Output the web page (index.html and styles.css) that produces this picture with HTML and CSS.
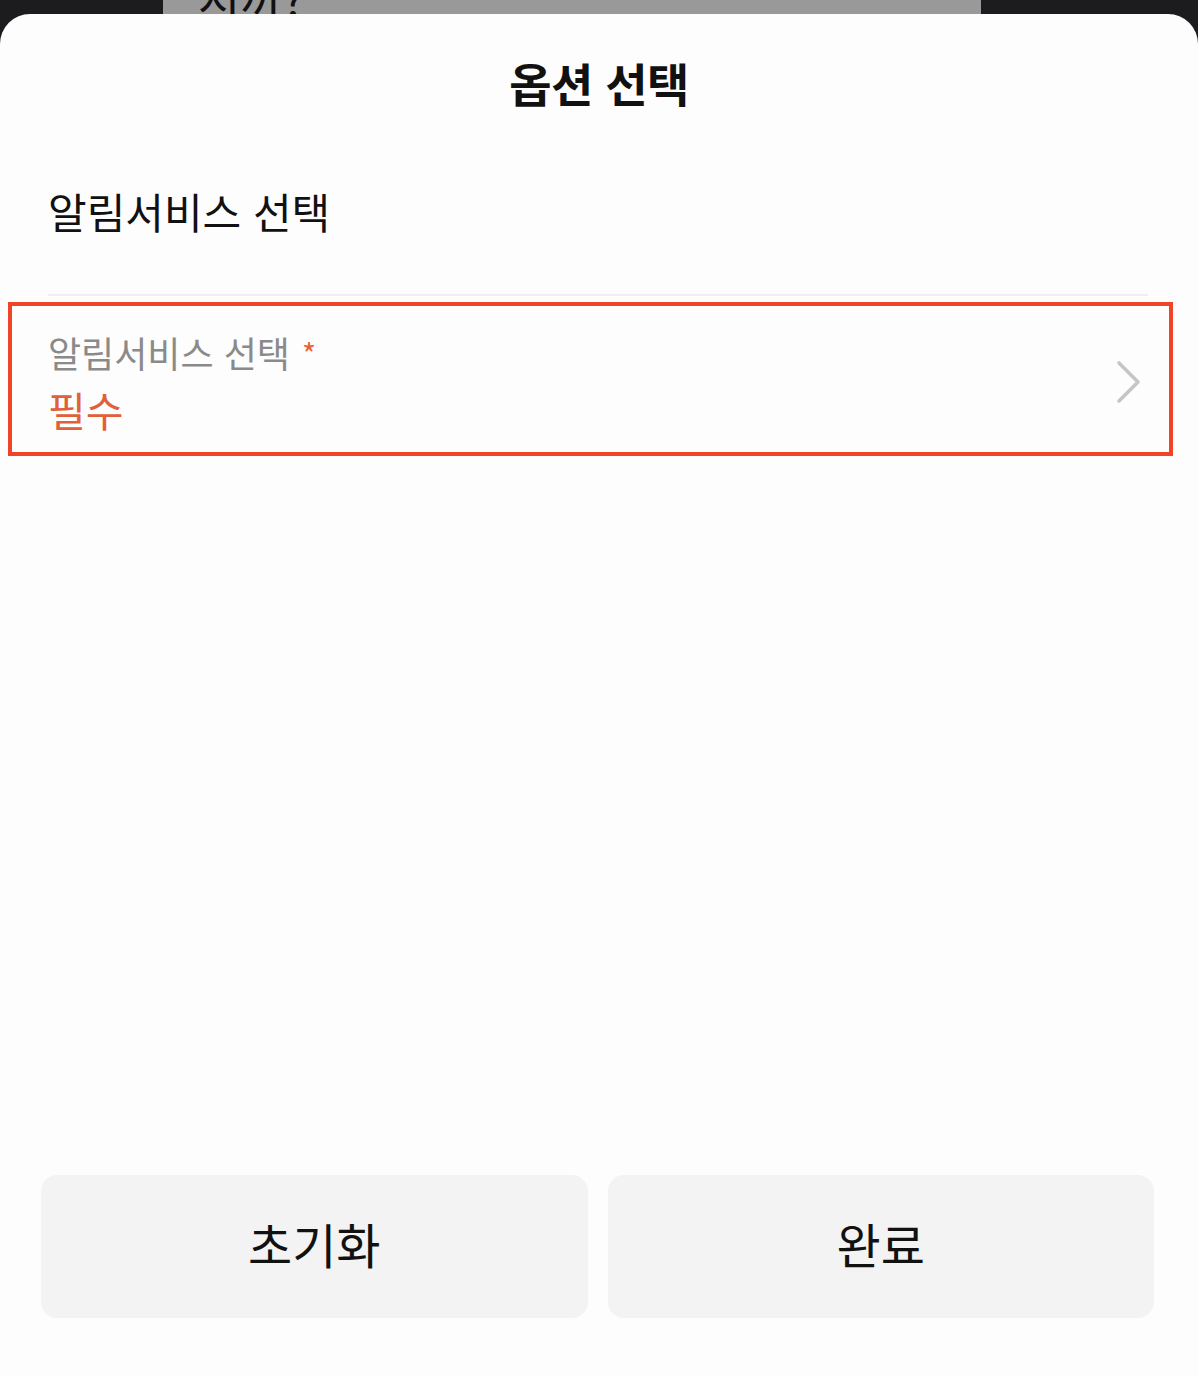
FILE: index.html
```html
<!DOCTYPE html>
<html lang="ko">
<head>
    <meta charset="UTF-8">
    <meta name="viewport" content="width=device-width, initial-scale=1.0">
    <title>옵션 선택</title>
    <link rel="stylesheet" href="styles.css">
</head>
<body>

<div class="backdrop">
    <div class="backdrop-card"><span>시까?</span></div>
</div>

<div class="sheet">
    <h2 class="sheet-title">옵션 선택</h2>

    <div class="section">
        <h3 class="section-title">알림서비스 선택</h3>
    </div>

    <div class="option-row">
        <div class="option-text">
            <div class="option-label">알림서비스 선택 <span class="required-mark">*</span></div>
            <div class="option-value">필수</div>
        </div>
        <svg class="chevron" width="28" height="44" viewBox="0 0 28 44">
            <path d="M5 3 L24 22 L5 41" fill="none" stroke="#c6c6c6" stroke-width="3.6" stroke-linecap="round" stroke-linejoin="round"/>
        </svg>
    </div>

    <div class="footer">
        <button class="footer-btn">초기화</button>
        <button class="footer-btn">완료</button>
    </div>
</div>

</body>
</html>
```

FILE: styles.css
```css
body {
    margin: 0;
    height: 1376px;
    overflow: hidden;
    background: #1c1c1e;
    font-family: "Noto Sans CJK KR", "Noto Sans", sans-serif;
    color: #111;
}
.backdrop {
    height: 14px;
    overflow: hidden;
    padding-left: 163px;
}
.backdrop-card {
    width: 818px;
    height: 14px;
    background: #999999;
    position: relative;
    overflow: hidden;
}
.backdrop-card span {
    position: absolute;
    left: 35px;
    bottom: -6px;
    font-size: 46px;
    line-height: 46px;
    color: #111;
}
.sheet {
    height: 1362px;
    background: #fdfdfd;
    border-radius: 30px 30px 0 0;
    display: flex;
    flex-direction: column;
    box-sizing: border-box;
}
.sheet-title {
    margin: 0;
    padding-top: 38px;
    font-size: 46px;
    line-height: 60px;
    font-weight: 700;
    text-align: center;
    letter-spacing: -0.5px;
}
.section {
    margin: 74px 50px 0 48px;
    padding-bottom: 58px;
    border-bottom: 2px solid #efefef;
}
.section-title {
    margin: 0;
    font-size: 42px;
    line-height: 50px;
    font-weight: 400;
}
.option-row {
    margin: 6px 25px 0 8px;
    border: 4px solid #ef4526;
    padding: 24px 27px 19px 36px;
    display: flex;
    align-items: center;
    justify-content: space-between;
}
.option-label {
    font-size: 36px;
    line-height: 44px;
    color: #8a8a8a;
}
.required-mark {
    color: #e8623c;
    font-size: 30px;
    vertical-align: 2px;
    margin-left: 2px;
}
.option-value {
    margin-top: 10px;
    font-size: 41px;
    line-height: 48px;
    color: #e0603a;
}
.chevron { display: block; }
.footer {
    margin-top: auto;
    padding: 0 44px 58px 41px;
    display: flex;
    gap: 20px;
}
.footer-btn {
    flex: 1;
    height: 143px;
    padding: 0 0 8px;
    border: none;
    border-radius: 16px;
    background: #f3f3f3;
    font-family: inherit;
    font-size: 48px;
    color: #111;
    cursor: pointer;
}
```
